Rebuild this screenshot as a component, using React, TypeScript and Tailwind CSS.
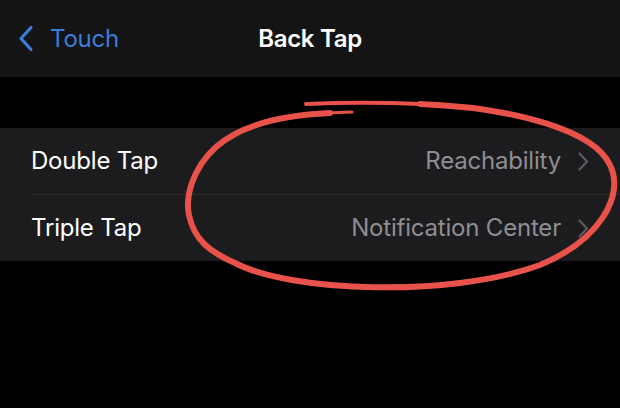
const rows = [
  { label: "Double Tap", value: "Reachability" },
  { label: "Triple Tap", value: "Notification Center" },
];

export default function App() {
  return (
    <div
      className="relative w-[620px] h-[408px] overflow-hidden bg-black text-white"
      style={{ fontFamily: "Inter, 'Noto Sans', sans-serif" }}
    >
      {/* Nav bar */}
      <header className="h-[77px] bg-[#141414] grid grid-cols-[1fr_auto_1fr] items-center">
        <div className="flex items-center pl-[18px] text-[#3b7ddd]">
          <svg width="16" height="27" viewBox="0 0 16 27" fill="none">
            <polyline
              points="13,2.5 3,13.5 13,24.5"
              stroke="currentColor"
              strokeWidth="3.2"
              strokeLinecap="round"
              strokeLinejoin="round"
            />
          </svg>
          <span className="ml-[16px] text-[24px] tracking-[-0.2px]">Touch</span>
        </div>
        <h1 className="text-[24px] font-semibold tracking-[-0.3px]">Back Tap</h1>
        <div />
      </header>

      <div className="h-[51px]" />

      {/* Settings group */}
      <div className="bg-[#1c1c1e]">
        {rows.map((r, i) => (
          <div key={r.label} className="pl-[31px]">
            <div
              className={
                "flex items-center pr-[31px] " +
                (i === 0 ? "h-[67px] border-b border-[#2c2c2e]" : "h-[66px]")
              }
            >
              <span className="text-[24px] tracking-[-0.2px]">{r.label}</span>
              <span className="ml-auto text-[24px] tracking-[-0.2px] text-[#8e8e93]">{r.value}</span>
              <svg className="ml-[17px]" width="11" height="19" viewBox="0 0 11 19" fill="none">
                <polyline
                  points="1.5,1.5 9,9.5 1.5,17.5"
                  stroke="#5a5a5f"
                  strokeWidth="2.2"
                  strokeLinecap="round"
                  strokeLinejoin="round"
                />
              </svg>
            </div>
          </div>
        ))}
      </div>

      {/* Red annotation circle */}
      <svg
        className="absolute inset-0 pointer-events-none"
        width="620"
        height="408"
        viewBox="0 0 620 408"
        fill="none"
      >
        <path
          d="M 330 113 C 285 115 242 124 216 147 C 193 168 185 196 189 215 C 194 240 210 252 235 263 C 290 292 450 298 540 265 C 600 240 625 195 610 165 C 595 132 520 108 420 104"
          stroke="#e8524b"
          strokeWidth="6"
          strokeLinecap="round"
        />
        <path d="M 352 112 C 345 112 338 112.5 330 113" stroke="#e8524b" strokeWidth="3" strokeLinecap="round" />
        <path d="M 420 104 C 370 102 330 103 306 104" stroke="#e8524b" strokeWidth="4" strokeLinecap="round" />
      </svg>
    </div>
  );
}
